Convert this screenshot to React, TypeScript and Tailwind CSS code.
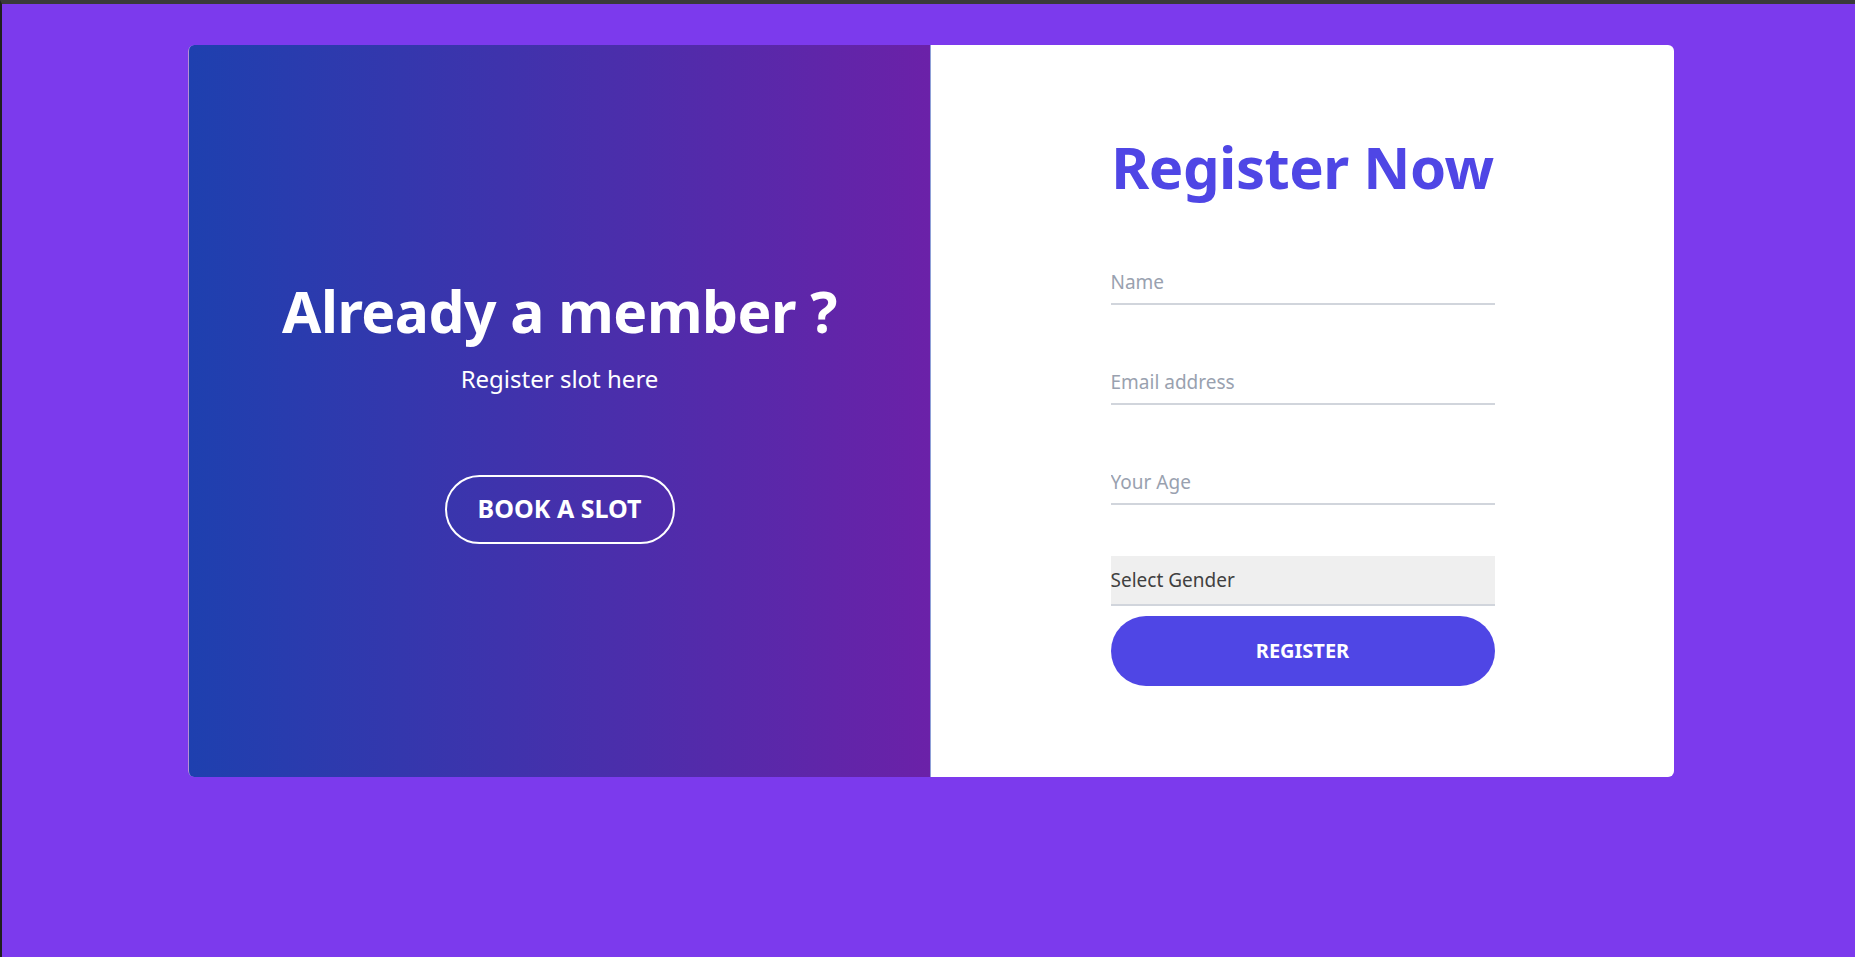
import { useState } from 'react';

const FIELDS = [
  { id: 'name', type: 'text', placeholder: 'Name' },
  { id: 'email', type: 'email', placeholder: 'Email address' },
  { id: 'age', type: 'number', placeholder: 'Your Age' },
];

export default function App() {
  const [form, setForm] = useState<Record<string, string>>({ name: '', email: '', age: '', gender: '' });

  return (
    <div
      className="min-h-screen bg-[#7c3aed] border-t-4 border-t-[#3a3a3a] border-l-2 border-l-[#1f1f1f] pt-[41px]"
      style={{ fontFamily: '"Noto Sans", "Open Sans", sans-serif' }}
    >
      <div className="ml-[186px] w-[1486px] h-[732px] flex rounded-md overflow-hidden">
        {/* Left side */}
        <div className="w-1/2 bg-[linear-gradient(to_right,#1e40af,#6b21a8)] border-x border-white/50 rounded-l-md flex flex-col items-center justify-center text-white">
          <h1 className="text-[57px] leading-[64px] font-bold tracking-[-0.5px]">Already a member ?</h1>
          <p className="mt-5 text-[24px] leading-8">Register slot here</p>
          <button className="mt-[80px] w-[230px] h-[69px] rounded-full border-2 border-white text-[25px] font-bold">
            BOOK A SLOT
          </button>
        </div>

        {/* Right side */}
        <div className="w-1/2 bg-white flex flex-col items-center justify-center pt-[2px]">
          <div className="w-96">
            <h2 className="text-[58px] leading-none font-bold text-[#4f46e5] text-center tracking-[-0.5px]">Register Now</h2>
            <form className="mt-[61px] flex flex-col" onSubmit={(e) => e.preventDefault()}>
              {FIELDS.map((f, i) => (
                <input
                  key={f.id}
                  type={f.type}
                  placeholder={f.placeholder}
                  value={form[f.id]}
                  onChange={(e) => setForm({ ...form, [f.id]: e.target.value })}
                  className={`${i > 0 ? 'mt-[52px]' : ''} h-12 pt-[3px] w-full border-b-2 border-gray-300 text-[19px] text-gray-700 placeholder:text-gray-400 outline-none`}
                />
              ))}
              <select
                value={form.gender}
                onChange={(e) => setForm({ ...form, gender: e.target.value })}
                className="mt-[51px] h-[50px] w-full appearance-none bg-[#efefef] border-b-2 border-gray-300 text-[19px] text-[#404040] outline-none"
              >
                <option value="">Select Gender</option>
                <option value="male">Male</option>
                <option value="female">Female</option>
              </select>
              <button
                type="submit"
                className="mt-[10px] h-[70px] w-full rounded-full bg-[#4f46e5] text-white text-[20px] font-bold"
              >
                REGISTER
              </button>
            </form>
          </div>
        </div>
      </div>
    </div>
  );
}
